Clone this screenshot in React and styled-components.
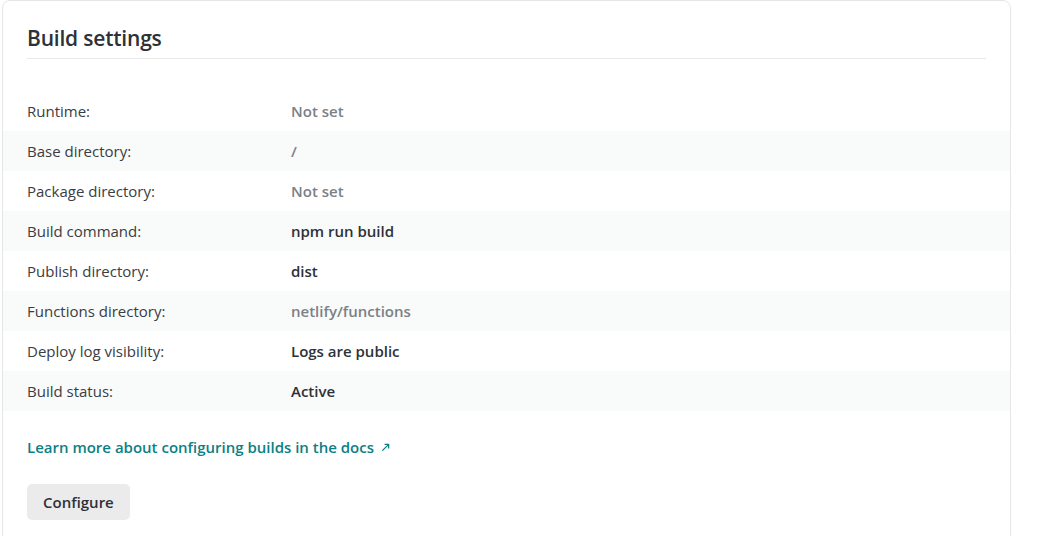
import React from "react";
import styled, { createGlobalStyle } from "styled-components";

const Global = createGlobalStyle`
  body {
    margin: 0;
    background: #fff;
    font-family: "Open Sans", "Noto Sans", sans-serif;
    color: #2d3138;
  }
`;

const Card = styled.section`
  box-sizing: border-box;
  margin-left: 2px;
  width: 1009px;
  min-height: 560px;
  border: 1px solid #e6e6e6;
  border-radius: 8px;
  background: #fff;
  padding-top: 21px;
`;

const Header = styled.div`
  margin: 0 24px;
  padding-bottom: 4px;
  border-bottom: 1px solid #e9e9e9;
`;

const Title = styled.h2`
  margin: 0;
  font-size: 21px;
  line-height: 32px;
  font-weight: 600;
  color: #2d3138;
  letter-spacing: -0.2px;
`;

const List = styled.dl`
  margin: 32px 0 0;
`;

const Row = styled.div`
  display: grid;
  grid-template-columns: 264px 1fr;
  align-items: center;
  height: 40px;
  padding: 0 24px;
  background: ${(p) => (p.$striped ? "#f9fafa" : "transparent")};
`;

const Label = styled.dt`
  font-size: 15px;
  color: #3a3d42;
`;

const Value = styled.dd`
  margin: 0;
  font-size: 15px;
  font-weight: 600;
  color: ${(p) => (p.$muted ? "#7c8087" : "#2d3138")};
`;

const Footer = styled.div`
  padding: 26px 24px 0;
  display: flex;
  flex-direction: column;
  align-items: flex-start;
  gap: 27px;
`;

const DocsLink = styled.a`
  font-size: 15px;
  line-height: 20px;
  font-weight: 600;
  color: #0c7f85;
  text-decoration: none;
  display: inline-flex;
  align-items: center;
  gap: 7px;
`;

const Button = styled.button`
  font-family: inherit;
  font-size: 15px;
  font-weight: 600;
  color: #2d3138;
  background: #ebebec;
  border: 0;
  border-radius: 5px;
  height: 36px;
  padding: 0 16px;
`;

const rows = [
  ["Runtime:", "Not set", true],
  ["Base directory:", "/", true],
  ["Package directory:", "Not set", true],
  ["Build command:", "npm run build", false],
  ["Publish directory:", "dist", false],
  ["Functions directory:", "netlify/functions", true],
  ["Deploy log visibility:", "Logs are public", false],
  ["Build status:", "Active", false],
];

export default function App() {
  return (
    <>
      <Global />
      <Card>
        <Header>
          <Title>Build settings</Title>
        </Header>
        <List>
          {rows.map(([label, value, muted], i) => (
            <Row key={label} $striped={i % 2 === 1}>
              <Label>{label}</Label>
              <Value $muted={muted}>{value}</Value>
            </Row>
          ))}
        </List>
        <Footer>
          <DocsLink href="#">
            Learn more about configuring builds in the docs
            <svg width="9" height="9" viewBox="0 0 10 10" fill="none" stroke="currentColor" strokeWidth="1.4">
              <path d="M1.5 8.5 8.5 1.5M4 1.5h4.5V6" />
            </svg>
          </DocsLink>
          <Button>Configure</Button>
        </Footer>
      </Card>
    </>
  );
}
